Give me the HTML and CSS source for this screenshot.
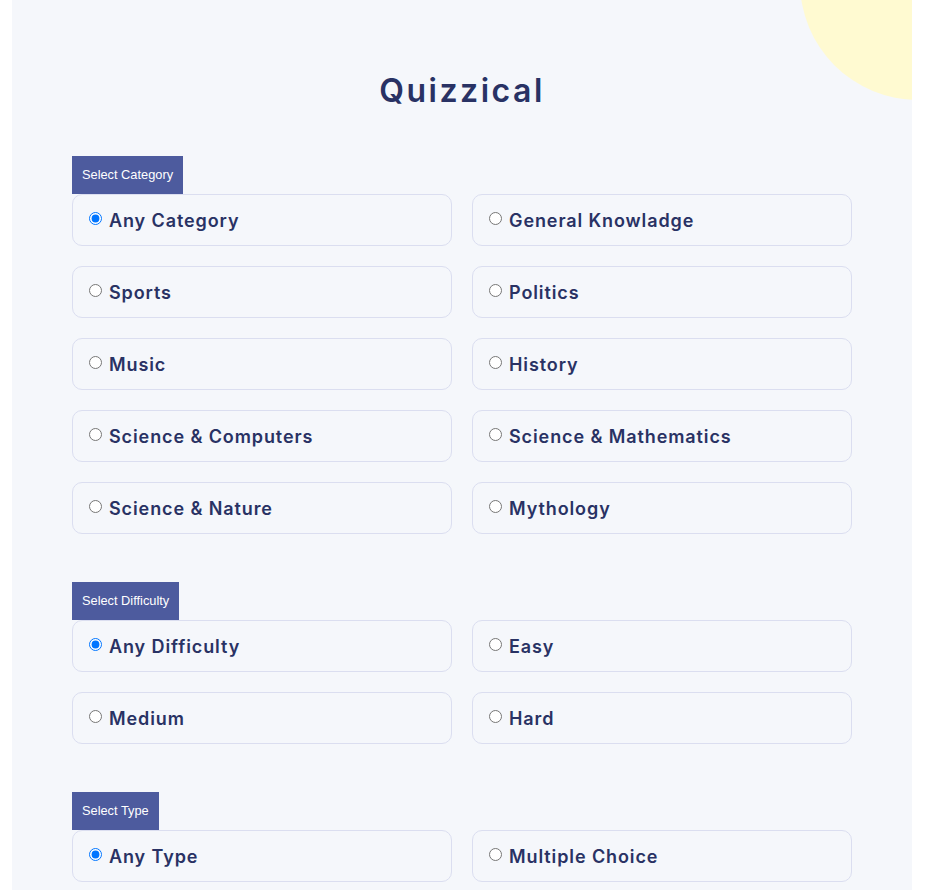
FILE: index.html
```html
<!DOCTYPE html>
<html lang="en">
<head>
<meta charset="utf-8">
<title>Quizzical</title>
<link rel="stylesheet" href="styles.css">
</head>
<body>
<main class="app">
  <div class="blob"></div>
  <h1 class="title">Quizzical</h1>
  <form class="setup">
    <section class="group">
      <div class="group-label">Select Category</div>
      <div class="options">
        <label class="option"><input type="radio" name="category" checked><span>Any Category</span></label>
        <label class="option"><input type="radio" name="category"><span>General Knowladge</span></label>
        <label class="option"><input type="radio" name="category"><span>Sports</span></label>
        <label class="option"><input type="radio" name="category"><span>Politics</span></label>
        <label class="option"><input type="radio" name="category"><span>Music</span></label>
        <label class="option"><input type="radio" name="category"><span>History</span></label>
        <label class="option"><input type="radio" name="category"><span>Science &amp; Computers</span></label>
        <label class="option"><input type="radio" name="category"><span>Science &amp; Mathematics</span></label>
        <label class="option"><input type="radio" name="category"><span>Science &amp; Nature</span></label>
        <label class="option"><input type="radio" name="category"><span>Mythology</span></label>
      </div>
    </section>
    <section class="group">
      <div class="group-label">Select Difficulty</div>
      <div class="options">
        <label class="option"><input type="radio" name="difficulty" checked><span>Any Difficulty</span></label>
        <label class="option"><input type="radio" name="difficulty"><span>Easy</span></label>
        <label class="option"><input type="radio" name="difficulty"><span>Medium</span></label>
        <label class="option"><input type="radio" name="difficulty"><span>Hard</span></label>
      </div>
    </section>
    <section class="group">
      <div class="group-label">Select Type</div>
      <div class="options">
        <label class="option"><input type="radio" name="type" checked><span>Any Type</span></label>
        <label class="option"><input type="radio" name="type"><span>Multiple Choice</span></label>
        <label class="option"><input type="radio" name="type"><span>True / False</span></label>
      </div>
    </section>
  </form>
</main>
</body>
</html>
```

FILE: styles.css
```css
html, body {
  margin: 0;
  padding: 0;
  background: #ffffff;
}

.app {
  position: relative;
  overflow: hidden;
  box-sizing: border-box;
  width: 900px;
  min-height: 100vh;
  margin-left: 12px;
  padding: 71px 60px 60px;
  background: #f5f7fb;
  color: #293264;
  font-family: Inter, "Noto Sans", sans-serif;
}

.blob {
  position: absolute;
  top: -136px;
  right: -124px;
  width: 236px;
  height: 236px;
  border-radius: 50%;
  background: #fffad1;
}

.title {
  position: relative;
  margin: 0 0 46px;
  text-align: center;
  font-size: 32px;
  font-weight: 600;
  line-height: normal;
  letter-spacing: 2.5px;
}

.setup {
  display: flex;
  flex-direction: column;
  gap: 48px;
}

.group-label {
  display: inline-block;
  padding: 12px 10px;
  background: #4d5b9e;
  color: #ffffff;
  font-family: Arial, "Liberation Sans", sans-serif;
  font-size: 12.8px;
  line-height: 14px;
}

.options {
  display: grid;
  grid-template-columns: 1fr 1fr;
  gap: 20px;
}

.option {
  display: flex;
  align-items: center;
  box-sizing: border-box;
  height: 52px;
  padding: 0 15px;
  border: 1px solid #dbdef0;
  border-radius: 10px;
  font-size: 18px;
  font-weight: 600;
  letter-spacing: 0.9px;
  cursor: pointer;
}

.option input {
  width: 13px;
  height: 13px;
  margin: -4px 7px 0 1px;
}
```
